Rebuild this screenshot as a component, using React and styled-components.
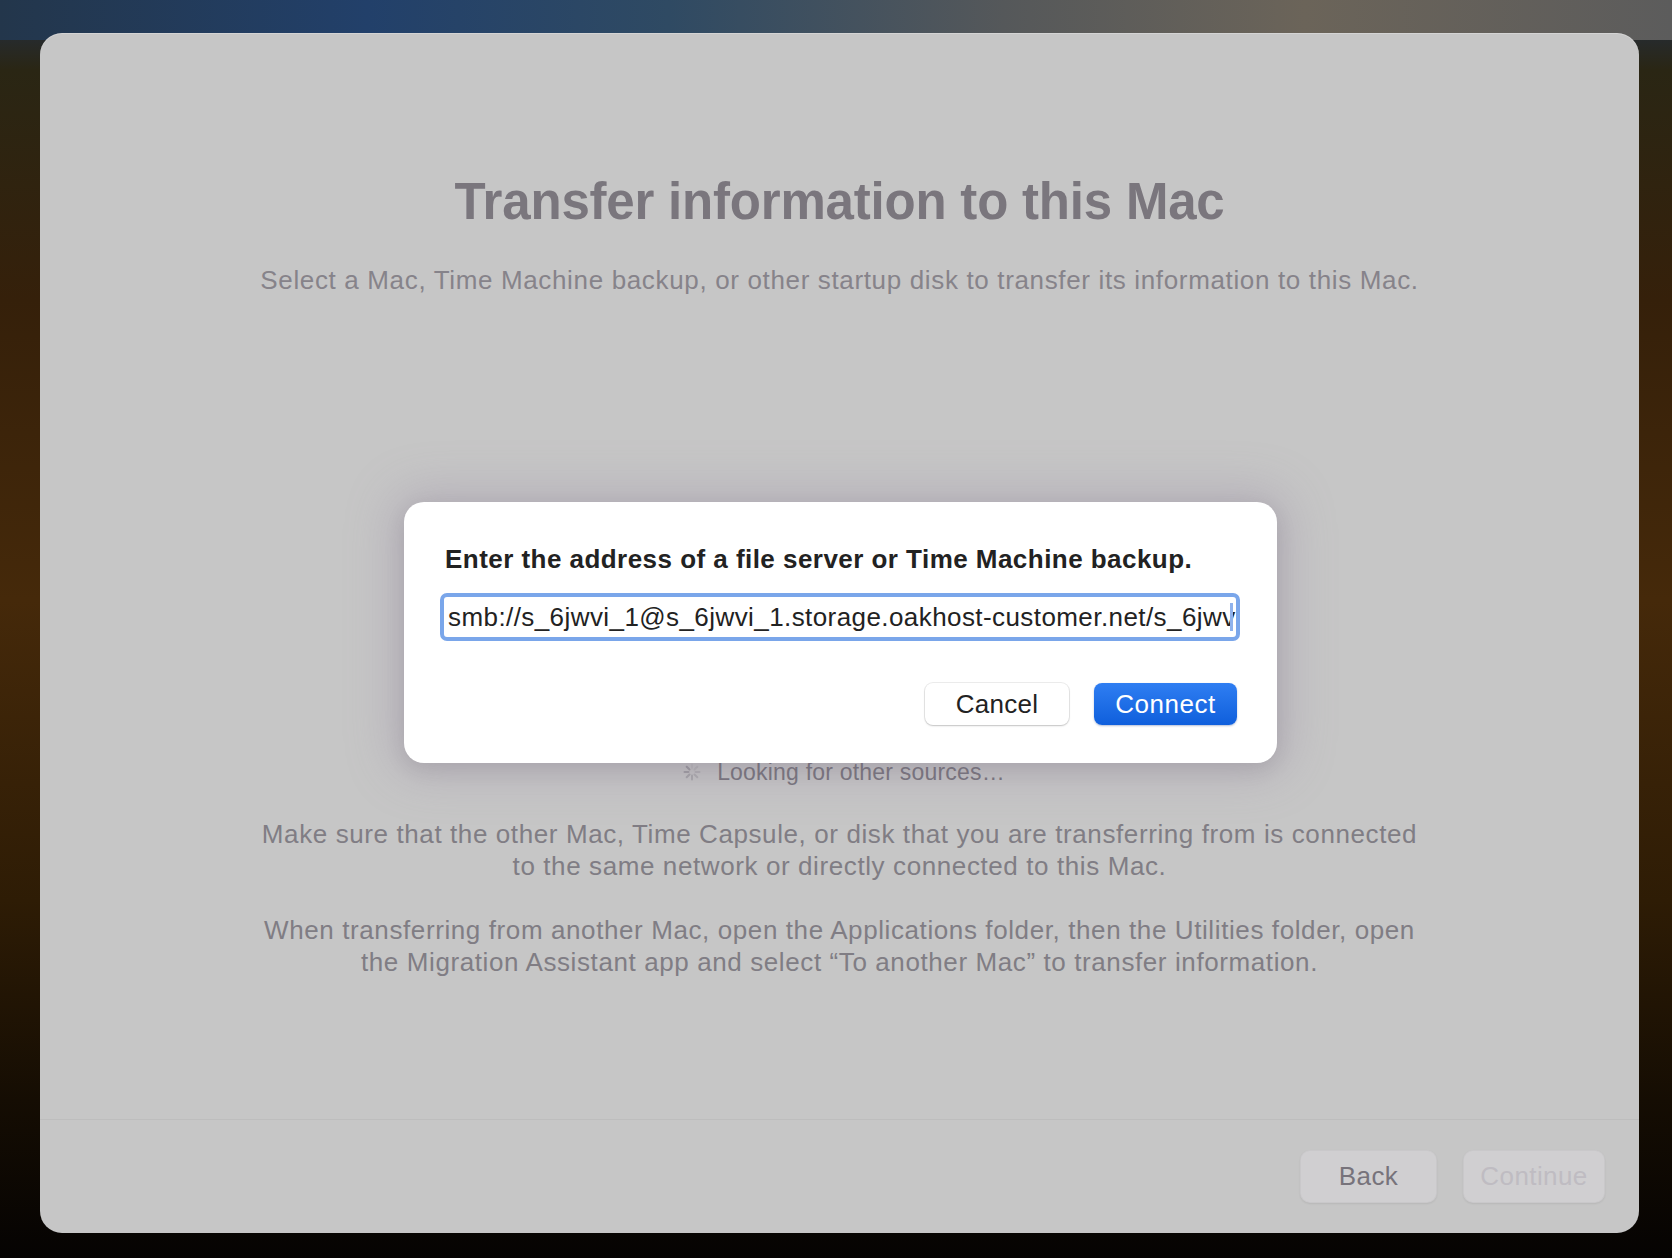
import React from 'react'
import styled, { createGlobalStyle } from 'styled-components'

const GlobalStyle = createGlobalStyle`
    html, body {
        margin: 0;
        padding: 0;
    }

    body {
        width: 1672px;
        height: 1258px;
        overflow: hidden;
        font-family: "Liberation Sans", Arial, sans-serif;
        background:
            linear-gradient(to right, #23364b 0%, #22406a 22%, #2f4a63 40%, #55585a 60%, #6b6459 78%, #5c5c5c 100%) top / 100% 40px no-repeat,
            linear-gradient(to bottom, #22304a 0px, #2a2614 70px, #35200a 300px, #45290a 600px, #2e1c05 900px, #150d03 1100px, #050302 1258px);
    }
`

const Screen = styled.div`
    box-sizing: border-box;
    height: 1258px;
    padding: 33px 33px 0 40px;
`

const Window = styled.div`
    position: relative;
    display: flex;
    flex-direction: column;
    width: 1599px;
    height: 1200px;
    background: #c6c6c6;
    border-radius: 22px;
    overflow: hidden;
    box-shadow: inset 0 1px 0 rgba(255, 255, 255, 0.25);
`

const Content = styled.div`
    flex: 1;
    display: flex;
    flex-direction: column;
    align-items: center;
    padding-top: 139px;
`

const Title = styled.h1`
    margin: 0;
    font-size: 51px;
    line-height: 60px;
    font-weight: 700;
    color: #7a767d;
    letter-spacing: -0.2px;
`

const Subtitle = styled.p`
    margin: 32px 0 0;
    font-size: 26px;
    line-height: 32px;
    letter-spacing: 0.65px;
    color: #86838a;
`

const SourceArea = styled.div`
    display: flex;
    align-items: center;
    gap: 15px;
    margin-top: 460px;
    margin-left: 8px;
    height: 32px;
    font-size: 23px;
    letter-spacing: 0.2px;
    color: #75727a;
`

const Notes = styled.div`
    margin-top: 30px;
    display: flex;
    flex-direction: column;
    gap: 32px;
`

const Note = styled.p`
    margin: 0;
    text-align: center;
    font-size: 26px;
    line-height: 32px;
    letter-spacing: 0.6px;
    color: #807d84;
`

const Footer = styled.div`
    display: flex;
    justify-content: flex-end;
    align-items: center;
    gap: 26px;
    height: 113px;
    padding-right: 34px;
    border-top: 1px solid #bdbdbd;
`

const FooterButton = styled.div`
    box-sizing: border-box;
    display: flex;
    align-items: center;
    justify-content: center;
    width: ${p => p.$width}px;
    height: 53px;
    border-radius: 10px;
    background: #d0cfd1;
    box-shadow: 0 1px 2px rgba(0, 0, 0, 0.08), inset 0 0 0 1px rgba(0, 0, 0, 0.03);
    font-size: 26px;
    letter-spacing: 0.4px;
    color: ${p => (p.$disabled ? '#bfbcc2' : '#77737b')};
`

const Sheet = styled.div`
    position: absolute;
    left: 364px;
    top: 469px;
    box-sizing: border-box;
    width: 873px;
    padding: 42px 37px 38px 36px;
    background: #ffffff;
    border-radius: 20px;
    box-shadow: 0 0 45px 12px rgba(150, 135, 160, 0.35), 0 6px 20px rgba(0, 0, 0, 0.1);
`

const SheetTitle = styled.div`
    padding-left: 5px;
    font-size: 26px;
    line-height: 30px;
    font-weight: 700;
    letter-spacing: 0.46px;
    color: #222222;
`

const Field = styled.div`
    position: relative;
    box-sizing: border-box;
    margin-top: 19px;
    height: 48px;
    padding: 0 4px;
    border: 4px solid #7aa6ea;
    border-radius: 7px;
    background: #ffffff;
    font-size: 26px;
    line-height: 40px;
    letter-spacing: 0.42px;
    color: #222222;
    white-space: nowrap;
    overflow: hidden;
`

const Caret = styled.span`
    position: absolute;
    right: 3px;
    top: 6px;
    width: 3px;
    height: 28px;
    background: #8fb2ec;
`

const Actions = styled.div`
    display: flex;
    justify-content: flex-end;
    gap: 25px;
    margin-top: 42px;
    padding-right: 3px;
`

const Button = styled.div`
    box-sizing: border-box;
    display: flex;
    align-items: center;
    justify-content: center;
    width: ${p => p.$width}px;
    height: 42px;
    border-radius: 8px;
    font-size: 26px;
    letter-spacing: ${p => (p.$primary ? '0.5px' : '0.3px')};
    color: ${p => (p.$primary ? '#ffffff' : '#222222')};
    background: ${p => (p.$primary ? 'linear-gradient(#2f7ef2, #0f5fdc)' : '#ffffff')};
    box-shadow: ${p => (p.$primary
        ? '0 1px 2px rgba(0, 40, 120, 0.3)'
        : '0 1px 2px rgba(0, 0, 0, 0.18), 0 0 0 1px rgba(0, 0, 0, 0.07)')};
`

const Spinner = () => (
    <svg width="20" height="20" viewBox="0 0 20 20">
        {Array.from({ length: 8 }).map((_, i) => (
            <line
                key={i}
                x1="10" y1="2.5" x2="10" y2="6.5"
                stroke="#8c8990"
                strokeWidth="2"
                strokeLinecap="round"
                opacity={0.15 + i * 0.08}
                transform={`rotate(${i * 45} 10 10)`}
            />
        ))}
    </svg>
)

const App = () => {

    return (
        <>
            <GlobalStyle />
            <Screen>
                <Window>
                    <Content>
                        <Title>Transfer information to this Mac</Title>
                        <Subtitle>
                            Select a Mac, Time Machine backup, or other startup disk to transfer its information to this Mac.
                        </Subtitle>
                        <SourceArea>
                            <Spinner />
                            <span>Looking for other sources…</span>
                        </SourceArea>
                        <Notes>
                            <Note>
                                Make sure that the other Mac, Time Capsule, or disk that you are transferring from is connected<br />
                                to the same network or directly connected to this Mac.
                            </Note>
                            <Note>
                                When transferring from another Mac, open the Applications folder, then the Utilities folder, open<br />
                                the Migration Assistant app and select “To another Mac” to transfer information.
                            </Note>
                        </Notes>
                    </Content>
                    <Footer>
                        <FooterButton $width={137}>Back</FooterButton>
                        <FooterButton $width={142} $disabled>Continue</FooterButton>
                    </Footer>

                    <Sheet>
                        <SheetTitle>Enter the address of a file server or Time Machine backup.</SheetTitle>
                        <Field>
                            smb://s_6jwvi_1@s_6jwvi_1.storage.oakhost-customer.net/s_6jwv
                            <Caret />
                        </Field>
                        <Actions>
                            <Button $width={144}>Cancel</Button>
                            <Button $width={143} $primary>Connect</Button>
                        </Actions>
                    </Sheet>
                </Window>
            </Screen>
        </>
    )
}

export default App
